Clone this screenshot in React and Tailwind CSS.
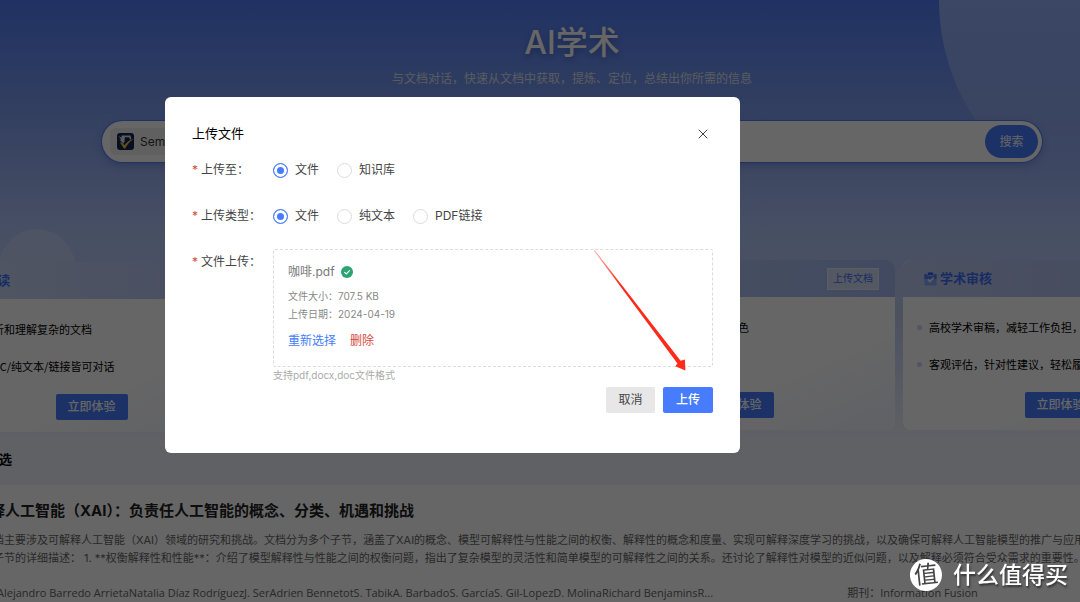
import React from 'react'
import { X } from 'lucide-react'

const TOOL_CARDS = [
    {
        title: 'AI阅读',
        points: ['快速分析和理解复杂的文档', 'PDF/DOC/纯文本/链接皆可对话'],
        className: 'translate-y-[2px]',
        header: 'from-[#cfd9f5] to-[#b0c3f6]',
    },
    {
        title: '学术翻译',
        points: ['多语种学术文献翻译', '保留原文排版格式'],
        header: 'from-[#cfd9f5] to-[#b0c3f6]',
    },
    {
        title: '学术润色',
        points: ['润色学术论文提升表达与特色', '一键优化语法'],
        header: 'from-[#b9c8f0] to-[#a3b9f2]',
        upload: true,
    },
    {
        title: '学术审核',
        points: ['高校学术审稿，减轻工作负担，提升效率', '客观评估，针对性建议，轻松履行职责'],
        header: 'from-[#bccbf2] to-[#a9bbea]',
    },
]

const ClipboardIcon = () => (
    <svg width="13" height="14" viewBox="0 0 13 14" className="shrink-0" aria-hidden="true">
        <path d="M1 2h11a.6.6 0 0 1 .6.6v9.8a1 1 0 0 1-1 1H1.400a1 1 0 0 1-1-1V2.600A.6.6 0 0 1 1 2z" fill="#86a6fa" />
        <path d="M.4 2.600A.6.6 0 0 1 1 2h11a.6.6 0 0 1 .6.600V7H.4z" fill="#4f7ef5" />
        <rect x="3.500" y="0" width="6" height="3.600" rx="1" fill="#2f62ea" stroke="#bccbf2" strokeWidth=".8" />
        <path d="M3.800 7.400l2.200 2.200 3.600-4" fill="none" stroke="#e8eeff" strokeWidth="1.500" />
    </svg>
)

const ScholarIcon = () => (
    <svg width="17" height="17" viewBox="0 0 17 17" className="shrink-0" aria-hidden="true">
        <rect width="17" height="17" rx="3" fill="#10244f" />
        <path d="M1.500 3l3 1.800V2.500h9l.8 3.500-1.300.8-.8-2.500H7.800l-.3 4.200-1 2L2.300 6.500l2 .3z" fill="#e6e6ea" />
        <path d="M3 9.500l2.200 0 2.300 2.700C9.500 9.500 12 7.200 16.500 6c-3.900 2.500-6.300 5.500-8.300 9.500H7z" fill="#ecc64c" />
    </svg>
)

const SuccessIcon = () => (
    <svg width="12" height="12" viewBox="0 0 12 12" aria-hidden="true">
        <circle cx="6" cy="6" r="6" fill="#2ba471" />
        <path d="M3.400 6.100l1.900 1.800 3.400-3.500" fill="none" stroke="#fff" strokeWidth="1.200" />
    </svg>
)

const ToolCard = ({ card }) => (
    <article className={`overflow-hidden rounded-lg bg-white ${card.className || ''}`}>
        <header className={`flex h-[37px] items-center gap-[3px] bg-gradient-to-r pr-4 pl-[21px] ${card.header}`}>
            <ClipboardIcon />
            <h2 className="text-[13px] font-bold text-[#3f6ff5]">{card.title}</h2>
            {card.upload && (
                <button className="ml-auto h-[22px] border border-[#e3e9f8] bg-[#d3dcf4] px-[5px] text-[10px] text-[#3f6ff5]">
                    上传文档
                </button>
            )}
        </header>
        <div className="flex flex-col items-center bg-gradient-to-br from-white from-60% to-[#f0f3fd] pt-5 pb-3">
            <ul className="flex w-full flex-col gap-[17px] pl-3.5 font-['Noto_Sans_CJK_SC',sans-serif]">
                {card.points.map((point) => (
                    <li key={point} className="flex items-center gap-[7px] text-[11px] leading-5 whitespace-nowrap text-black">
                        <span className="size-[5px] shrink-0 rounded-full bg-[#ccd6f2]" />
                        {point}
                    </li>
                ))}
            </ul>
            <button className="mt-[18px] h-[26px] w-[72px] rounded-xs bg-[#467cfd] text-xs font-medium text-white">
                立即体验
            </button>
        </div>
    </article>
)

const Radio = ({ name, label, checked }) => (
    <label className="flex items-center gap-[7px] text-xs text-[#444]">
        <input
            type="radio"
            name={name}
            defaultChecked={checked}
            className="size-[15px] appearance-none rounded-full border border-[#dcdcdc] bg-white checked:border-[#467cfd] checked:bg-[#467cfd] checked:shadow-[inset_0_0_0_3px_white]"
        />
        {label}
    </label>
)

const FieldLabel = ({ children }) => (
    <span className="w-[81px] shrink-0 text-xs leading-[26px] text-[#444]">
        <span className="mr-[3px] text-[#d54941]">*</span>
        {children}
    </span>
)

const UploadDialog = () => (
    <div className="fixed inset-0 flex items-start justify-center bg-black/60 pt-[97px] pr-[175px]">
        <section
            role="dialog"
            aria-label="上传文件"
            className="relative w-full max-w-[575px] rounded-md bg-white px-[27px] pt-[25px] pb-10"
        >
            <div className="flex h-6 items-center justify-between">
                <h2 className="text-[13px] text-black">上传文件</h2>
                <button aria-label="关闭" className="mr-0.5 text-[#444]">
                    <X size={16} strokeWidth={1.5} />
                </button>
            </div>

            <form className="mt-[11px] flex flex-col gap-5">
                <div className="flex items-center" role="radiogroup" aria-label="上传至">
                    <FieldLabel>上传至：</FieldLabel>
                    <div className="flex gap-[18px]">
                        <Radio name="target" label="文件" checked />
                        <Radio name="target" label="知识库" />
                    </div>
                </div>
                <div className="flex items-center" role="radiogroup" aria-label="上传类型">
                    <FieldLabel>上传类型：</FieldLabel>
                    <div className="flex gap-[18px]">
                        <Radio name="kind" label="文件" checked />
                        <Radio name="kind" label="纯文本" />
                        <Radio name="kind" label="PDF链接" />
                    </div>
                </div>
                <div className="flex items-start">
                    <FieldLabel>文件上传：</FieldLabel>
                    <div className="min-w-0 flex-1">
                        <div className="h-[118px] rounded-xs border border-dashed border-[#dcdcdc] px-3.5 pt-3">
                            <div className="flex items-center gap-1.5 text-xs leading-5 text-[#777]">
                                咖啡.pdf
                                <SuccessIcon />
                            </div>
                            <div className="mt-[5px] text-[10px] leading-[18px] text-[#888]">
                                <p>文件大小：707.5 KB</p>
                                <p>上传日期：2024-04-19</p>
                            </div>
                            <div className="mt-2 flex gap-3.5 text-xs leading-5">
                                <button type="button" className="text-[#467cfd]">重新选择</button>
                                <button type="button" className="text-[#d54941]">删除</button>
                            </div>
                        </div>
                        <p className="text-[10px] leading-4 text-[#aaa]">支持pdf,docx,doc文件格式</p>
                        <div className="mt-1 flex justify-end gap-2 text-xs">
                            <button type="button" className="h-[26px] w-[49px] rounded-xs bg-[#e7e7e7] text-[#444]">取消</button>
                            <button type="button" className="h-[26px] w-[50px] rounded-xs bg-[#467cfd] font-medium text-white">上传</button>
                        </div>
                    </div>
                </div>
            </form>

            {/* Red pointer to the upload button */}
            <svg
                className="pointer-events-none absolute top-[153px] left-[429px]"
                width="94"
                height="122"
                viewBox="0 0 94 122"
                aria-hidden="true"
            >
                <defs>
                    <linearGradient id="pointer" x1="0" y1="0" x2="1" y2="1">
                        <stop offset="0" stopColor="#ff2a1a" stopOpacity="0.35" />
                        <stop offset="0.3" stopColor="#ff2a1a" />
                    </linearGradient>
                </defs>
                <path d="M.6 0L86.600 110.800 90.900 109.500 91.400 120.500 81.300 116.300 83.400 113.400 0 .8z" fill="url(#pointer)" />
            </svg>
        </section>
    </div>
)

const Watermark = () => (
    <div className="fixed right-3 bottom-[9px] flex items-center gap-[11px] text-white">
        <span className="flex size-8 -rotate-6 items-center justify-center rounded-full bg-white text-2xl leading-none text-[#444]">
            值
        </span>
        <span className="text-[23px] leading-9 font-medium [text-shadow:1px_2px_2px_rgba(0,0,0,0.5)]">什么值得买</span>
    </div>
)

const App = () => {
    return (
        <div className="relative h-screen overflow-hidden bg-[#eef2fc] font-[Inter,'Noto_Sans_CJK_SC',sans-serif]">
            <main className="relative overflow-hidden bg-[linear-gradient(to_bottom,#507df7_0,#7f9ef0_110px,#b2c6fa_230px,#c3cef0_320px,#eef2fc_440px)]">
                <div className="absolute -top-[215px] left-[939px] size-[430px] rounded-full bg-gradient-to-b from-white/40 from-50% to-white/0 to-90%" />
                <div className="absolute top-[229px] -left-px size-[76px] rounded-full bg-white/20" />

                <div className="relative pt-[23px] pr-[38px] pl-[102px] text-center">
                    <h1 className="text-[32px] leading-10 font-medium text-white [text-shadow:0_3px_6px_rgba(20,40,120,0.4)]">AI学术</h1>
                    <p className="mt-2 text-xs leading-4 text-[#dfe3ee]">与文档对话，快速从文档中获取，提炼、定位，总结出你所需的信息</p>
                    <div className="mt-[34px] flex h-[41px] items-center rounded-full bg-white pr-1 pl-2 shadow-[0_0_0_1px_#507df7,0_3px_8px_rgba(60,90,180,0.4)]">
                        <div className="flex h-[27px] items-center gap-1.5 rounded-md bg-[#efefef] px-[7px]">
                            <ScholarIcon />
                            <select aria-label="搜索来源" className="appearance-none bg-transparent text-xs text-[#333]">
                                <option>Semantic Scholar</option>
                            </select>
                        </div>
                        <input aria-label="搜索内容" className="min-w-0 flex-1 px-3 text-xs outline-none" />
                        <button className="h-[33px] w-[53px] rounded-full bg-[#467cfd] text-xs text-white">搜索</button>
                    </div>
                </div>

                <div className="relative mt-[98px] -mr-[138px] -ml-[66px] grid grid-cols-4 gap-2">
                    {TOOL_CARDS.map((card) => (
                        <ToolCard key={card.title} card={card} />
                    ))}
                </div>

                <h2 className="relative mt-[19px] -ml-10 pb-4 text-[13px] leading-5 font-bold text-black">每日精选</h2>
            </main>

            <article className="overflow-hidden bg-white pt-3.5 pr-[11px] whitespace-nowrap">
                <div className="-ml-10">
                    <h3 className="text-[15px] leading-6 font-bold text-[#222]">
                        可解释人工智能（XAI）：负责任人工智能的概念、分类、机遇和挑战
                    </h3>
                    <p className="mt-2 text-[11px] leading-[18px] text-[#666]">
                        这篇文档主要涉及可解释人工智能（XAI）领域的研究和挑战。文档分为多个子节，涵盖了XAI的概念、模型可解释性与性能之间的权衡、解释性的概念和度量、实现可解释深度学习的挑战，以及确保可解释人工智能模型的推广与应用。
                        <br />
                        以下是子节的详细描述： 1. **权衡解释性和性能**：介绍了模型解释性与性能之间的权衡问题，指出了复杂模型的灵活性和简单模型的可解释性之间的关系。还讨论了解释性对模型的近似问题，以及解释必须符合受众需求的重要性。
                    </p>
                    <div className="mt-4 grid grid-cols-[4fr_1fr] font-['Open_Sans','Noto_Sans_CJK_SC',sans-serif] text-[11px] leading-5 text-[#666]">
                        <p className="flex gap-1">
                            <span>作者：</span>
                            <span>Alejandro Barredo ArrietaNatalia Díaz RodríguezJ. SerAdrien BennetotS. TabikA. BarbadoS. GarcíaS. Gil-LopezD. MolinaRichard BenjaminsR...</span>
                        </p>
                        <p>期刊：Information Fusion</p>
                    </div>
                </div>
            </article>

            <UploadDialog />
            <Watermark />
        </div>
    )
}

export default App
